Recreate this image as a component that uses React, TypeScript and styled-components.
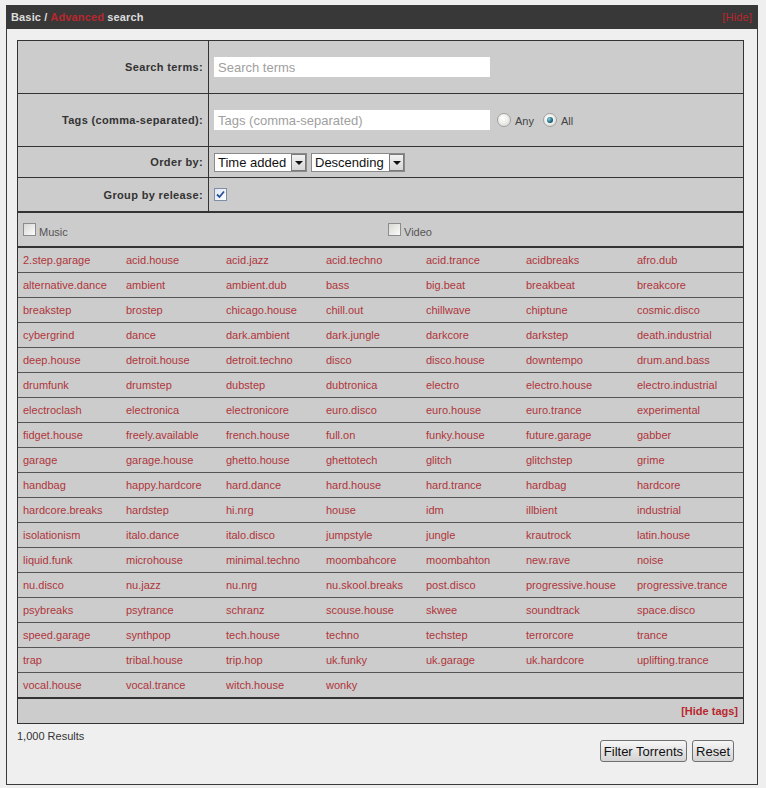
import styled, { createGlobalStyle } from 'styled-components'

const GlobalStyle = createGlobalStyle`
  html, body {
    margin: 0;
    padding: 0;
    background: #efefef;
    font-family: "Liberation Sans", Arial, sans-serif;
    font-size: 11px;
    color: #333;
  }
`

const TAGS = [
  '2.step.garage', 'acid.house', 'acid.jazz', 'acid.techno', 'acid.trance', 'acidbreaks', 'afro.dub',
  'alternative.dance', 'ambient', 'ambient.dub', 'bass', 'big.beat', 'breakbeat', 'breakcore',
  'breakstep', 'brostep', 'chicago.house', 'chill.out', 'chillwave', 'chiptune', 'cosmic.disco',
  'cybergrind', 'dance', 'dark.ambient', 'dark.jungle', 'darkcore', 'darkstep', 'death.industrial',
  'deep.house', 'detroit.house', 'detroit.techno', 'disco', 'disco.house', 'downtempo', 'drum.and.bass',
  'drumfunk', 'drumstep', 'dubstep', 'dubtronica', 'electro', 'electro.house', 'electro.industrial',
  'electroclash', 'electronica', 'electronicore', 'euro.disco', 'euro.house', 'euro.trance', 'experimental',
  'fidget.house', 'freely.available', 'french.house', 'full.on', 'funky.house', 'future.garage', 'gabber',
  'garage', 'garage.house', 'ghetto.house', 'ghettotech', 'glitch', 'glitchstep', 'grime',
  'handbag', 'happy.hardcore', 'hard.dance', 'hard.house', 'hard.trance', 'hardbag', 'hardcore',
  'hardcore.breaks', 'hardstep', 'hi.nrg', 'house', 'idm', 'illbient', 'industrial',
  'isolationism', 'italo.dance', 'italo.disco', 'jumpstyle', 'jungle', 'krautrock', 'latin.house',
  'liquid.funk', 'microhouse', 'minimal.techno', 'moombahcore', 'moombahton', 'new.rave', 'noise',
  'nu.disco', 'nu.jazz', 'nu.nrg', 'nu.skool.breaks', 'post.disco', 'progressive.house', 'progressive.trance',
  'psybreaks', 'psytrance', 'schranz', 'scouse.house', 'skwee', 'soundtrack', 'space.disco',
  'speed.garage', 'synthpop', 'tech.house', 'techno', 'techstep', 'terrorcore', 'trance',
  'trap', 'tribal.house', 'trip.hop', 'uk.funky', 'uk.garage', 'uk.hardcore', 'uplifting.trance',
  'vocal.house', 'vocal.trance', 'witch.house', 'wonky',
]

const PER_ROW = 7
const tagRows: string[][] = []
for (let i = 0; i < TAGS.length; i += PER_ROW) tagRows.push(TAGS.slice(i, i + PER_ROW))

const Box = styled.div`
  width: 752px;
  margin: 5px 0 0 6px;
`

const Head = styled.div`
  height: 24px;
  background: #383838;
  display: flex;
  align-items: center;
  justify-content: space-between;
  padding: 0 6px 0 5px;
  font-weight: bold;
  letter-spacing: 0.15px;
  color: #ddd;
`

const HeadLink = styled.a<{ $bold?: boolean }>`
  color: #b8272d;
  text-decoration: none;
  font-weight: ${(p) => (p.$bold ? 'bold' : 'normal')};
`

const Body = styled.div`
  border: 1px solid #3a3a3a;
  border-top: none;
  padding: 11px 13px 22px 10px;
`

const Table = styled.div`
  width: 725px;
  border: 1px solid #333;
  background: #cccccc;
`

const FormRow = styled.div<{ $h: number; $thick?: boolean }>`
  display: grid;
  grid-template-columns: 191px 1fr;
  height: ${(p) => p.$h}px;
  border-bottom: ${(p) => (p.$thick ? 2 : 1)}px solid #333;
`

const Label = styled.div`
  border-right: 1px solid #333;
  display: flex;
  align-items: center;
  justify-content: flex-end;
  padding-right: 5px;
  font-weight: bold;
  letter-spacing: 0.35px;
  color: #333;
`

const Value = styled.div`
  display: flex;
  align-items: center;
  padding-left: 5px;
  gap: 4px;
`

const TextInput = styled.input`
  width: 276px;
  height: 20px;
  box-sizing: border-box;
  border: none;
  outline: none;
  background: #fff;
  padding: 0 4px;
  font-family: "Liberation Sans", Arial, sans-serif;
  font-size: 13px;
  color: #333;
  &::placeholder {
    color: #a0a0a0;
  }
`

const RadioGroup = styled.div`
  display: flex;
  align-items: center;
  margin-left: 3px;
  gap: 9px;
  font-size: 11px;
  color: #444;
`

const RadioLabel = styled.label`
  display: flex;
  align-items: center;
  gap: 4px;
  padding-top: 1px;
`

const RadioDot = styled.span<{ $on?: boolean }>`
  width: 12px;
  height: 12px;
  border-radius: 50%;
  border: 1px solid #a0a0a0;
  background: radial-gradient(circle at 40% 35%, #ffffff 0%, #e8e8e4 60%, #d0d0cc 100%);
  position: relative;
  margin-top: -1px;
  &::after {
    content: '';
    display: ${(p) => (p.$on ? 'block' : 'none')};
    position: absolute;
    left: 3px;
    top: 3px;
    width: 6px;
    height: 6px;
    border-radius: 50%;
    background: radial-gradient(circle at 35% 35%, #8fd0e0 0%, #1e6a84 55%, #0e3d50 100%);
  }
`

const Select = styled.div<{ $w: number }>`
  width: ${(p) => p.$w}px;
  height: 19px;
  box-sizing: border-box;
  border: 1px solid #8a8a8a;
  background: #fff;
  display: flex;
  align-items: stretch;
  font-size: 13px;
  color: #111;
`

const SelectText = styled.span`
  flex: 1;
  padding-left: 3px;
  line-height: 17px;
`

const SelectArrow = styled.span`
  width: 15px;
  border: 1px solid #7a7a7a;
  background: linear-gradient(#f2f2f2, #d6d6d6);
  box-sizing: border-box;
  display: flex;
  align-items: center;
  justify-content: center;
  &::before {
    content: '';
    border-left: 4px solid transparent;
    border-right: 4px solid transparent;
    border-top: 4px solid #111;
    margin-top: 1px;
  }
`

const Check = styled.span<{ $on?: boolean }>`
  width: 13px;
  height: 13px;
  box-sizing: border-box;
  border: 1px solid ${(p) => (p.$on ? '#7e8ea6' : '#8c8c8c')};
  background: ${(p) =>
    p.$on ? 'linear-gradient(135deg, #dfe6f0, #ffffff)' : 'linear-gradient(135deg, #d8d8d4, #fbfbfb)'};
  display: inline-flex;
  align-items: center;
  justify-content: center;
  flex: none;
`

const CatRow = styled.div`
  display: grid;
  grid-template-columns: 365px 1fr;
  height: 33px;
  border-bottom: 2px solid #333;
`

const CatCell = styled.label`
  display: flex;
  align-items: center;
  padding-left: 5px;
  gap: 3px;
  color: #555;
  span + span {
    padding-top: 5px;
  }
`

const TagRow = styled.div<{ $last?: boolean }>`
  display: grid;
  grid-template-columns: 103px 100px 100px 100px 100px 111px 1fr;
  height: 24px;
  border-bottom: ${(p) => (p.$last ? '2px solid #333' : '1px solid #555')};
`

const Tag = styled.a`
  padding-left: 5px;
  display: flex;
  align-items: center;
  color: #b0353b;
  text-decoration: none;
  white-space: nowrap;
`

const HideRow = styled.div`
  height: 24px;
  display: flex;
  align-items: center;
  justify-content: flex-end;
  padding-right: 5px;
`

const Foot = styled.div`
  display: flex;
  justify-content: space-between;
  align-items: flex-start;
`

const Results = styled.div`
  margin-top: 6px;
  color: #333;
`

const Buttons = styled.div`
  display: flex;
  gap: 5px;
  margin-top: 16px;
  margin-right: 10px;
`

const Button = styled.button`
  height: 22px;
  padding: 0 3px;
  font-family: "Liberation Sans", Arial, sans-serif;
  font-size: 13px;
  color: #111;
  border: 1px solid #707070;
  border-radius: 3px;
  background: linear-gradient(#f6f6f6, #e4e4e4 50%, #d4d4d4);
  cursor: pointer;
`

const Tick = () => (
  <svg width="9" height="9" viewBox="0 0 9 9">
    <path d="M1 4.5 L3.5 7 L8 1.5" fill="none" stroke="#2b4f9e" strokeWidth="1.8" />
  </svg>
)

const App = () => {
  return (
    <>
      <GlobalStyle />
      <Box>
        <Head>
          <span>
            Basic / <HeadLink href="#" $bold>Advanced</HeadLink> search
          </span>
          <HeadLink href="#">[Hide]</HeadLink>
        </Head>
        <Body>
          <Table>
            <FormRow $h={52}>
              <Label>Search terms:</Label>
              <Value>
                <TextInput placeholder="Search terms" />
              </Value>
            </FormRow>
            <FormRow $h={52}>
              <Label>Tags (comma-separated):</Label>
              <Value>
                <TextInput placeholder="Tags (comma-separated)" />
                <RadioGroup>
                  <RadioLabel>
                    <RadioDot />
                    Any
                  </RadioLabel>
                  <RadioLabel>
                    <RadioDot $on />
                    All
                  </RadioLabel>
                </RadioGroup>
              </Value>
            </FormRow>
            <FormRow $h={30}>
              <Label>Order by:</Label>
              <Value>
                <Select $w={93}>
                  <SelectText>Time added</SelectText>
                  <SelectArrow />
                </Select>
                <Select $w={94}>
                  <SelectText>Descending</SelectText>
                  <SelectArrow />
                </Select>
              </Value>
            </FormRow>
            <FormRow $h={33} $thick>
              <Label>Group by release:</Label>
              <Value>
                <Check $on>
                  <Tick />
                </Check>
              </Value>
            </FormRow>
            <CatRow>
              <CatCell>
                <Check />
                <span>Music</span>
              </CatCell>
              <CatCell>
                <Check />
                <span>Video</span>
              </CatCell>
            </CatRow>
            {tagRows.map((row, i) => (
              <TagRow key={i} $last={i === tagRows.length - 1}>
                {row.map((t) => (
                  <Tag key={t} href="#">
                    {t}
                  </Tag>
                ))}
              </TagRow>
            ))}
            <HideRow>
              <HeadLink href="#" $bold>
                [Hide tags]
              </HeadLink>
            </HideRow>
          </Table>
          <Foot>
            <Results>1,000 Results</Results>
            <Buttons>
              <Button>Filter Torrents</Button>
              <Button>Reset</Button>
            </Buttons>
          </Foot>
        </Body>
      </Box>
    </>
  )
}

export default App
